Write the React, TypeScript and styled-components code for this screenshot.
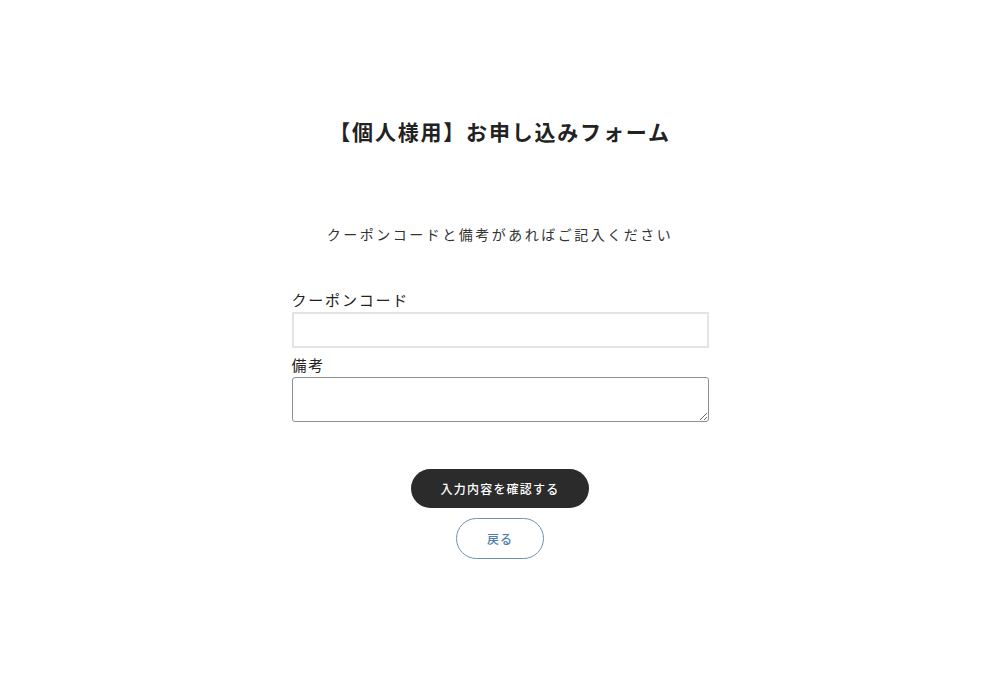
import React from "react";
import styled, { createGlobalStyle } from "styled-components";

const Global = createGlobalStyle`
  html, body { margin: 0; padding: 0; background: #fff; }
  body {
    font-family: "Noto Sans CJK JP", "Noto Sans", sans-serif;
    color: #222;
  }
  * { box-sizing: border-box; }
`;

const Page = styled.main`
  width: 417px;
  margin: 0 auto;
  padding-top: 120px;
  display: flex;
  flex-direction: column;
  align-items: stretch;
`;

const Title = styled.h1`
  margin: 0;
  font-size: 21px;
  line-height: 22px;
  font-weight: 700;
  letter-spacing: 1.8px;
  text-align: center;
  color: #222;
  white-space: nowrap;
`;

const Lead = styled.p`
  margin: 85px 0 0;
  font-size: 14px;
  line-height: 14px;
  letter-spacing: 2.5px;
  text-align: center;
  color: #333;
  white-space: nowrap;
`;

const Form = styled.form`
  margin-top: 51px;
  display: flex;
  flex-direction: column;
`;

const Field = styled.div<{ $gap?: number }>`
  display: flex;
  flex-direction: column;
  gap: 4px;
  margin-top: ${(p) => p.$gap ?? 0}px;
`;

const Label = styled.label`
  font-size: 15px;
  line-height: 16px;
  letter-spacing: 1.8px;
  color: #222;
`;

const TextInput = styled.input`
  width: 100%;
  height: 36px;
  border: 2px solid #e4e4e4;
  border-radius: 0;
  padding: 0 8px;
  font: inherit;
  outline: none;
  background: #fff;
`;

const TextArea = styled.textarea`
  width: 100%;
  height: 45px;
  border: 1px solid #8f8f8f;
  border-radius: 3px;
  padding: 4px 8px;
  font: inherit;
  resize: vertical;
  outline: none;
  display: block;
`;

const Actions = styled.div`
  margin-top: 47px;
  display: flex;
  flex-direction: column;
  align-items: center;
  gap: 10px;
`;

const PrimaryButton = styled.button`
  width: 178px;
  height: 39px;
  border: none;
  border-radius: 20px;
  background: #2b2b2b;
  color: #fff;
  font-family: inherit;
  font-size: 12px;
  font-weight: 500;
  letter-spacing: 1.2px;
  cursor: pointer;
`;

const BackButton = styled.button`
  width: 88px;
  height: 41px;
  border: 1px solid #6d93b4;
  border-radius: 21px;
  background: #fff;
  color: #4f7fa8;
  font-family: inherit;
  font-size: 12px;
  font-weight: 500;
  letter-spacing: 1px;
  cursor: pointer;
`;

export default function App() {
  return (
    <>
      <Global />
      <Page>
        <Title>【個人様用】お申し込みフォーム</Title>
        <Lead>クーポンコードと備考があればご記入ください</Lead>
        <Form onSubmit={(e) => e.preventDefault()}>
          <Field>
            <Label htmlFor="coupon">クーポンコード</Label>
            <TextInput id="coupon" type="text" />
          </Field>
          <Field $gap={9}>
            <Label htmlFor="note">備考</Label>
            <TextArea id="note" />
          </Field>
          <Actions>
            <PrimaryButton type="submit">入力内容を確認する</PrimaryButton>
            <BackButton type="button">戻る</BackButton>
          </Actions>
        </Form>
      </Page>
    </>
  );
}
